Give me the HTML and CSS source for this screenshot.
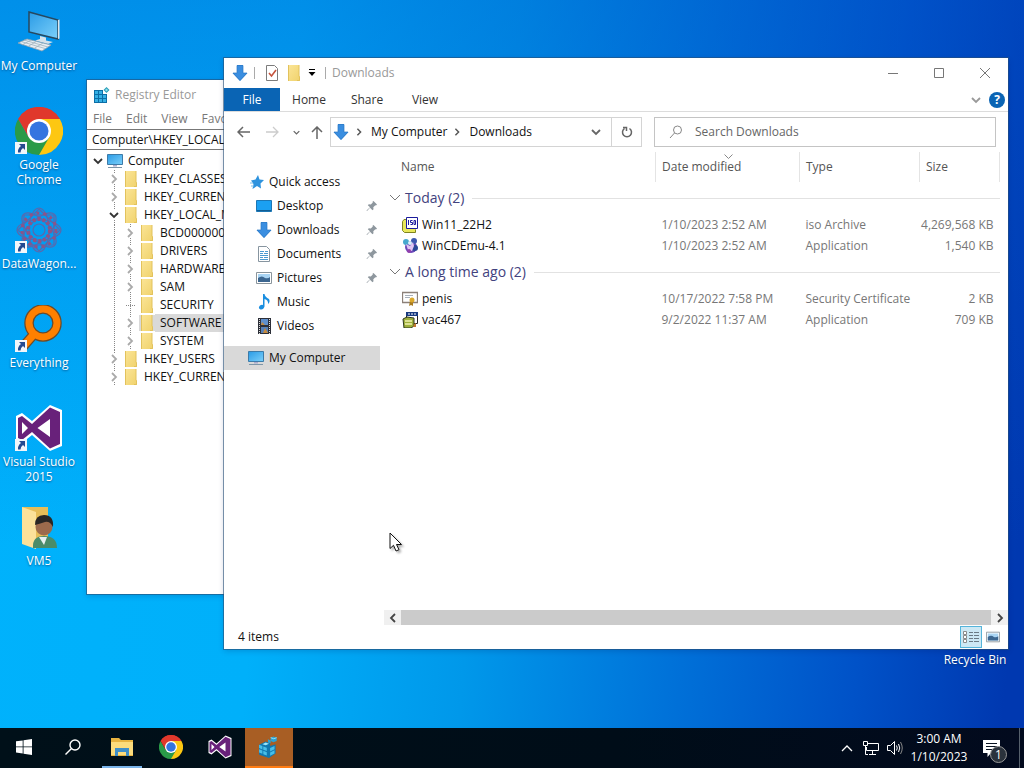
FILE: index.html
```html
<!DOCTYPE html>
<html lang="en">
<head>
    <meta charset="UTF-8">
    <meta name="viewport" content="width=device-width, initial-scale=1.0">
    <title>Downloads</title>
    <link rel="stylesheet" href="styles.css">
</head>
<body>
    <!-- shared icons -->
    <svg class="defs" aria-hidden="true">
        <defs>
            <linearGradient id="screen" x1="0" y1="0" x2="1" y2="1">
                <stop offset="0" stop-color="#2a9be6"/>
                <stop offset="1" stop-color="#7cd0fa"/>
            </linearGradient>
            <linearGradient id="fold" x1="0" y1="0" x2="1" y2="1">
                <stop offset="0" stop-color="#fbe597"/>
                <stop offset="1" stop-color="#f0d26c"/>
            </linearGradient>
        </defs>
        <symbol id="folder" viewBox="0 0 16 16">
            <path d="M2 0h11v11l1 1v4H2z" fill="url(#fold)"/>
            <path d="M2.500 0v16M13 0v11.500h.5v4H11" fill="none" stroke="#e2c25c"/>
        </symbol>
        <symbol id="down" viewBox="0 0 16 16">
            <path d="M5 0h6v8h4.500L8 16 .5 8H5z" fill="#3a8ee0"/>
            <path d="M5 .5h6v7.500h4L8 15.500 1 8h4z" fill="none" stroke="#2c78c4" stroke-width=".7"/>
        </symbol>
        <symbol id="pc" viewBox="0 0 16 16">
            <path d="M.5 1.500h15v10H.5z" fill="url(#screen)" stroke="#3d7ba8"/>
            <path d="M6 12h4v1.500H6z" fill="#aac"/>
            <path d="M1 14.500h14" stroke="#7d95a8"/>
        </symbol>
        <symbol id="chrome" viewBox="0 0 48 48">
            <path d="M24 24 3.200 12A24 24 0 0 1 44.800 12z" fill="#e0382c"/>
            <path d="M24 24V12h20.800A24 24 0 0 1 24 48z" fill="#fdc712"/>
            <path d="M24 24 34.400 30 24 48A24 24 0 0 1 3.200 12L13.600 30z" fill="#2a9a48"/>
            <path d="M24 12h20.800A24 24 0 0 0 3.200 12L13.600 30z" fill="#e0382c"/>
            <circle cx="24" cy="24" r="12" fill="#fff"/>
            <circle cx="24" cy="24" r="9.500" fill="#3474e0"/>
        </symbol>
        <symbol id="vs" viewBox="0 0 48 48">
            <path d="M35 1 47 6v36l-12 5-18-16-10 8-6-3V12l6-3 10 8z" fill="#fff"/>
            <path d="M35 3.500 45 8v32l-10 4.500-18-16.500L7 36l-4-2V14l4-2 10 8z" fill="#68217a"/>
            <path d="M35 15v18L22.500 24zM7 18v12l6-6z" fill="#fff"/>
        </symbol>
        <symbol id="regedit" viewBox="0 0 20 20">
            <path d="M1 8 7 5l4 1.500V9l5-1.500V16l-6 4-9-3z" fill="#1178b0"/>
            <path d="m1 8 3 1.200v3L1 11zm3.800 1.500L8 10.700v3l-3.200-1.200zM1 12l3 1.200v3L1 15zm3.800 1.500L8 14.700v3l-3.200-1.200zM11 11l4-2v3l-4 2zm0 4 4-2v3l-4 2z" fill="#49bfe8"/>
            <path d="m4 7.500 3-1.500 3 1-3 1.500z" fill="#9be6fa"/>
            <path d="m14 .5 3 1v3l-3 1.200-2.500-1.200v-3zM9 3l2.500 1v2.500L9 6z" fill="#2aa2d4"/>
            <path d="m11.500 1.500 2.800 1L17 1.500" fill="none" stroke="#a0e8fa" stroke-width=".8"/>
        </symbol>
        <symbol id="regedit-small" viewBox="0 0 16 16">
            <path d="M0 3h13v13H0z" fill="#0c6ea6"/>
            <path d="M1 4h3v3H1zm4 0h3v3H5zM1 8h3v3H1zm4 0h3v3H5zm4 0h3v3H9zM1 12h3v3H1zm4 0h3v3H5zm4 0h3v3H9z" fill="#35b0e4"/>
            <path d="M9 3h4v4H9z" fill="#fff"/>
            <path d="m12.500 0 3 3-3 3-3-3z" fill="#2b9fb8"/>
            <path d="m12.500 1.500 1.500 1.500-1.500 1.500L11 3z" fill="#8fe0ee"/>
        </symbol>
        <symbol id="shortcut" viewBox="0 0 12 12">
            <path d="M0 0h12v12H0z" fill="#f2f6fa"/>
            <path d="M4 2h6v6L8 6Q5.500 7.500 5.500 10.500H3Q2.500 6.500 6 4z" fill="#244a90"/>
        </symbol>
        <symbol id="picture" viewBox="0 0 16 16">
            <path d="M.5 2.500h15v11H.5z" fill="#fff" stroke="#8a959c"/>
            <path d="M2 4h12v8H2z" fill="#a9d4f3"/>
            <path d="M2 8q4-3 7 0 3 1 5-1v5H2z" fill="#3c6690"/>
        </symbol>
        <symbol id="chev-right" viewBox="0 0 10 10"><path d="m3 1 4 4-4 4" fill="none" stroke="currentColor" stroke-width="1.800"/></symbol>
        <symbol id="chev-down" viewBox="0 0 10 10"><path d="m1 3 4 4 4-4" fill="none" stroke="currentColor" stroke-width="1.800"/></symbol>
        <symbol id="pin" viewBox="0 0 12 12">
            <path d="M7.500 1 11 4.500l-1 1-.7-.2-2 2 .2 2-1 1L4 7.800 1 11l-.5-.5L4 7.200 1.800 5.200l1-1 2 .2 2-2-.3-.6z" fill="#8e979e"/>
        </symbol>
    </svg>

    <main class="desktop">
        <div class="shortcuts">
            <a class="shortcut" href="#">
                <svg class="big" viewBox="0 0 48 48">
                    <path d="m14 4 29 8v19l-29-7z" fill="url(#screen)" stroke="#27485f" stroke-width="1.500"/>
                    <path d="m43 12 1.500-.5v19L43 31z" fill="#dde6ec"/>
                    <path d="m25 28 6 1.500v3l7 1.500-5 2-13-3.500 5-1.500z" fill="#d7e2ea"/>
                    <path d="m12 31 24 6-9 6L3 35z" fill="#e8eef2" stroke="#8aa0b0" stroke-width=".8"/>
                    <path d="m9 32 24 7M6 33.500l24 7M16 32l-9 5M22 33l-9 5.500M28 35l-9 5.500" stroke="#9fb2be" stroke-width=".8"/>
                </svg>
                <span>My Computer</span>
            </a>
            <a class="shortcut" href="#">
                <svg class="big"><use href="#chrome"/></svg>
                <svg class="arrow"><use href="#shortcut"/></svg>
                <span>Google Chrome</span>
            </a>
            <a class="shortcut" href="#">
                <svg class="big" viewBox="0 0 48 48">
                    <g fill="none" stroke="#5a68ac" stroke-width="1.200">
                        <circle cx="24" cy="24" r="6"/>
                        <ellipse cx="24" cy="24" rx="22" ry="10"/>
                        <ellipse cx="24" cy="24" rx="10" ry="22"/>
                        <ellipse cx="24" cy="24" rx="22" ry="10" transform="rotate(45 24 24)"/>
                        <ellipse cx="24" cy="24" rx="22" ry="10" transform="rotate(-45 24 24)"/>
                        <path d="M9 9h30v30H9zM24 3l21 21-21 21L3 24z"/>
                    </g>
                    <circle cx="24" cy="24" r="11" fill="none" stroke="#8c5488" stroke-width="4" stroke-dasharray="3 2"/>
                    <circle cx="24" cy="24" r="17" fill="none" stroke="#8c5488" stroke-width="3" stroke-dasharray="3 4"/>
                </svg>
                <svg class="arrow"><use href="#shortcut"/></svg>
                <span>DataWagon...</span>
            </a>
            <a class="shortcut" href="#">
                <svg class="big" viewBox="0 0 48 48">
                    <path d="m20 28-14 16" stroke="#6b4a2a" stroke-width="10"/>
                    <circle cx="28" cy="18" r="14" fill="none" stroke="#6b4a2a" stroke-width="9.500"/>
                    <path d="m20 28-14 16" stroke="#ff8000" stroke-width="7.500"/>
                    <circle cx="28" cy="18" r="14" fill="none" stroke="#ff8000" stroke-width="7"/>
                </svg>
                <svg class="arrow"><use href="#shortcut"/></svg>
                <span>Everything</span>
            </a>
            <a class="shortcut" href="#">
                <svg class="big"><use href="#vs"/></svg>
                <svg class="arrow"><use href="#shortcut"/></svg>
                <span>Visual Studio 2015</span>
            </a>
            <a class="shortcut" href="#">
                <svg class="big" viewBox="0 0 48 48">
                    <path d="M7 4h26v36H7z" fill="#e6bd58"/>
                    <path d="m7 4 14 5v37L7 41z" fill="#fbe19a"/>
                    <path d="M18 45q-1-12 11-12 13 0 13 12z" fill="#4a8c6a"/>
                    <path d="m24 34 5 8 3-8z" fill="#e8f0f0"/>
                    <circle cx="29" cy="24" r="8.500" fill="#9c6a4c"/>
                    <path d="M20 22q0-10 9-10 10 0 9 12-3-6-8-5-6 2-10 3z" fill="#2a2624"/>
                </svg>
                <span>VM5</span>
            </a>
        </div>
        <a class="shortcut recycle" href="#"><span>Recycle Bin</span></a>

        <section class="window registry">
            <header class="reg-title">
                <svg class="i16"><use href="#regedit-small"/></svg>
                <span>Registry Editor</span>
            </header>
            <nav class="reg-menu">
                <a href="#">File</a><a href="#">Edit</a><a href="#">View</a><a href="#">Favorites</a><a href="#">Help</a>
            </nav>
            <input class="reg-path" type="text" aria-label="Key path" value="Computer\HKEY_LOCAL_MACHINE\SOFTWARE">
            <ul class="tree">
                <li>
                    <div class="key"><svg class="exp open"><use href="#chev-down"/></svg><svg class="i16"><use href="#pc"/></svg><span>Computer</span></div>
                    <ul class="level">
                        <li><div class="key"><svg class="exp"><use href="#chev-right"/></svg><svg class="i16"><use href="#folder"/></svg><span>HKEY_CLASSES_ROOT</span></div></li>
                        <li><div class="key"><svg class="exp"><use href="#chev-right"/></svg><svg class="i16"><use href="#folder"/></svg><span>HKEY_CURRENT_USER</span></div></li>
                        <li>
                            <div class="key"><svg class="exp open"><use href="#chev-down"/></svg><svg class="i16"><use href="#folder"/></svg><span>HKEY_LOCAL_MACHINE</span></div>
                            <ul class="sublevel">
                                <li><div class="key"><svg class="exp"><use href="#chev-right"/></svg><svg class="i16"><use href="#folder"/></svg><span>BCD00000000</span></div></li>
                                <li><div class="key"><svg class="exp"><use href="#chev-right"/></svg><svg class="i16"><use href="#folder"/></svg><span>DRIVERS</span></div></li>
                                <li><div class="key"><svg class="exp"><use href="#chev-right"/></svg><svg class="i16"><use href="#folder"/></svg><span>HARDWARE</span></div></li>
                                <li><div class="key"><svg class="exp"><use href="#chev-right"/></svg><svg class="i16"><use href="#folder"/></svg><span>SAM</span></div></li>
                                <li><div class="key"><i class="leaf"></i><svg class="i16"><use href="#folder"/></svg><span>SECURITY</span></div></li>
                                <li><div class="key selected"><svg class="exp"><use href="#chev-right"/></svg><svg class="i16"><use href="#folder"/></svg><span>SOFTWARE</span></div></li>
                                <li><div class="key"><svg class="exp"><use href="#chev-right"/></svg><svg class="i16"><use href="#folder"/></svg><span>SYSTEM</span></div></li>
                            </ul>
                        </li>
                        <li><div class="key"><svg class="exp"><use href="#chev-right"/></svg><svg class="i16"><use href="#folder"/></svg><span>HKEY_USERS</span></div></li>
                        <li><div class="key"><svg class="exp"><use href="#chev-right"/></svg><svg class="i16"><use href="#folder"/></svg><span>HKEY_CURRENT_CONFIG</span></div></li>
                    </ul>
                </li>
            </ul>
        </section>

        <section class="window explorer">
            <header class="titlebar">
                <svg class="i16"><use href="#down"/></svg>
                <i class="bar"></i>
                <button class="quick" aria-label="Properties">
                    <svg class="i16" viewBox="0 0 16 16">
                        <path d="M2.500.5h8l3 3v12h-11z" fill="#fff" stroke="#7c7c7c"/>
                        <path d="m5 8 2.500 3L12 5" fill="none" stroke="#c5533c" stroke-width="1.600"/>
                    </svg>
                </button>
                <button class="quick" aria-label="New folder"><svg class="i16"><use href="#folder"/></svg></button>
                <button class="quick narrow" aria-label="Customize toolbar">
                    <svg width="8" height="8" viewBox="0 0 8 8"><path d="M1 .5h6" stroke="#000"/><path d="M.5 3h7L4 7z"/></svg>
                </button>
                <i class="bar"></i>
                <h1>Downloads</h1>
                <div class="controls">
                    <button aria-label="Minimize"><svg width="10" height="11" viewBox="0 0 10 11"><path d="M0 5.500h10" stroke="#777"/></svg></button>
                    <button aria-label="Maximize"><svg width="10" height="10" viewBox="0 0 10 10"><path d="M.5.5h9v9H.5z" fill="none" stroke="#777"/></svg></button>
                    <button aria-label="Close"><svg width="10" height="10" viewBox="0 0 10 10"><path d="m0 0 10 10m0-10L0 10" stroke="#777"/></svg></button>
                </div>
            </header>
            <nav class="tabs">
                <a class="file" href="#">File</a><a href="#">Home</a><a href="#">Share</a><a href="#">View</a>
                <button class="expand" aria-label="Expand ribbon"><svg class="i10"><use href="#chev-down"/></svg></button>
                <button class="help" aria-label="Help">?</button>
            </nav>
            <div class="navbar">
                <button class="go" aria-label="Back"><svg width="13" height="12" viewBox="0 0 13 12"><path d="M13 6H1.500M6 1 1 6l5 5" fill="none" stroke="#666" stroke-width="1.500"/></svg></button>
                <button class="go" aria-label="Forward"><svg width="13" height="12" viewBox="0 0 13 12"><path d="M0 6h11.500M7 1l5 5-5 5" fill="none" stroke="#ccc" stroke-width="1.300"/></svg></button>
                <button class="go small" aria-label="Recent"><svg width="7" height="7"><use href="#chev-down"/></svg></button>
                <button class="go up" aria-label="Up"><svg width="12" height="13" viewBox="0 0 12 13"><path d="M6 13V1.500M1 6l5-5 5 5" fill="none" stroke="#666" stroke-width="1.500"/></svg></button>
                <div class="address">
                    <svg class="i16"><use href="#down"/></svg>
                    <svg class="crumb-sep"><use href="#chev-right"/></svg>
                    <a href="#">My Computer</a>
                    <svg class="crumb-sep"><use href="#chev-right"/></svg>
                    <a href="#">Downloads</a>
                    <button class="history" aria-label="Previous locations"><svg class="i10"><use href="#chev-down"/></svg></button>
                    <button class="refresh" aria-label="Refresh"><svg width="12" height="12" viewBox="0 0 12 12"><path d="M3.500 2.500A4.500 4.500 0 1 0 8.500 2.500M2 1.500h3.500V5" fill="none" stroke="#666" stroke-width="1.500"/></svg></button>
                </div>
                <label class="search">
                    <svg width="14" height="14" viewBox="0 0 14 14"><circle cx="8.500" cy="5" r="4" fill="none" stroke="#888"/><path d="M5.500 8 1 13" stroke="#888"/></svg>
                    <input type="text" placeholder="Search Downloads" aria-label="Search Downloads">
                </label>
            </div>
            <div class="content">
                <nav class="places">
                    <a class="top" href="#">
                        <svg width="14" height="14" viewBox="0 0 14 14"><path d="m8 0 1.500 4.500L14 5l-3.500 3.500L11 13.500 7 11l-4.500 3L3.500 9 1 5.500l4.500-1z" fill="#2e93de"/><path d="M0 8h3M1 11h3" stroke="#79bdea"/></svg>
                        Quick access
                    </a>
                    <a href="#">
                        <svg class="i16" viewBox="0 0 16 16"><path d="M.5 2.500h15v11H.5z" fill="#1ba0f2" stroke="#1c77b5"/><path d="M1 12.500h14" stroke="#125d93"/></svg>
                        <span>Desktop</span><svg class="pin"><use href="#pin"/></svg>
                    </a>
                    <a href="#">
                        <svg class="i16"><use href="#down"/></svg>
                        <span>Downloads</span><svg class="pin"><use href="#pin"/></svg>
                    </a>
                    <a href="#">
                        <svg class="i16" viewBox="0 0 16 16"><path d="M2.500.5h8l3 3v12h-11z" fill="#fff" stroke="#8795a0"/><path d="M4 5.500h4m1 0h3M4 7.500h3m1 0h4M4 9.500h8M4 11.500h3m1 0h4M4 13.500h8" stroke="#4a9ad0"/></svg>
                        <span>Documents</span><svg class="pin"><use href="#pin"/></svg>
                    </a>
                    <a href="#">
                        <svg class="i16"><use href="#picture"/></svg>
                        <span>Pictures</span><svg class="pin"><use href="#pin"/></svg>
                    </a>
                    <a href="#">
                        <svg class="i16" viewBox="0 0 16 16"><path d="M7 0h1.500q.5 3 4.500 5 1.500 3-1 5 .5-4-3.500-5v7.500Q7.500 16 4.500 15.500 1.500 14 4 11.500 5.500 10.500 7 11z" fill="#1a8ee0"/></svg>
                        <span>Music</span>
                    </a>
                    <a href="#">
                        <svg class="i16" viewBox="0 0 16 16"><path d="M2 0h13v16H2z" fill="#2c2f38"/><path d="M5 1h7v6H5z" fill="#5f8fcc"/><path d="M5 9h7v6H5z" fill="#5680b8"/><path d="M6 4l3 3H5zM9 10l3 5H7z" fill="#c58a3e"/><path d="M3.500 1v15M13.500 1v15" stroke="#ddd" stroke-dasharray="1 1"/></svg>
                        <span>Videos</span>
                    </a>
                    <a class="top current" href="#">
                        <svg class="i16"><use href="#pc"/></svg>
                        My Computer
                    </a>
                </nav>
                <div class="files">
                    <table>
                        <colgroup><col><col class="c-date"><col class="c-type"><col class="c-size"></colgroup>
                        <thead>
                            <tr>
                                <th>Name</th>
                                <th>Date modified<svg class="sort" width="9" height="5" viewBox="0 0 9 5"><path d="m.5.5 4 4 4-4" fill="none" stroke="#888"/></svg></th>
                                <th>Type</th>
                                <th>Size</th>
                            </tr>
                        </thead>
                        <tbody>
                            <tr class="group"><th colspan="4"><div><svg class="i12" viewBox="0 0 12 12"><path d="m1 3 5 5 5-5" fill="none" stroke="#777"/></svg>Today (2)</div></th></tr>
                            <tr>
                                <td><div class="name"><svg class="i16" viewBox="0 0 16 16"><path d="M4 2.500h-2l-1.500 2v9l2 2h11v-3" fill="#e8e85a" stroke="#7f8420"/><path d="M4.500.5h11v11h-11z" fill="#fff" stroke="#1b1b9c"/><path d="M6.500 3v5M12 3.500h1.500v4H12zM10.500 3.500h-2v2h2v2h-2" fill="none" stroke="#1b1b9c"/></svg>Win11_22H2</div></td>
                                <td>1/10/2023 2:52 AM</td><td>iso Archive</td><td>4,269,568 KB</td>
                            </tr>
                            <tr>
                                <td><div class="name"><svg class="i16" viewBox="0 0 16 16"><circle cx="9" cy="9" r="6" fill="#6b48b8"/><circle cx="4" cy="4" r="3" fill="#47a8ce"/><circle cx="12" cy="3" r="3" fill="#3b58b0"/><circle cx="13" cy="10" r="3" fill="#2a4898"/><path d="m4 6 4 2 3-4 1 4-2 5-4-1z" fill="#e0c4f2"/><circle cx="7" cy="13" r="2" fill="#923fae"/><circle cx="8" cy="5" r="2" fill="#d8f0fa"/></svg>WinCDEmu-4.1</div></td>
                                <td>1/10/2023 2:52 AM</td><td>Application</td><td>1,540 KB</td>
                            </tr>
                        </tbody>
                        <tbody>
                            <tr class="group"><th colspan="4"><div><svg class="i12" viewBox="0 0 12 12"><path d="m1 3 5 5 5-5" fill="none" stroke="#777"/></svg>A long time ago (2)</div></th></tr>
                            <tr>
                                <td><div class="name"><svg class="i16" viewBox="0 0 16 16"><path d="M.5 1.500h15v10H.5z" fill="#fff" stroke="#8c8078" stroke-width="1.300"/><path d="M3 4.500h8M3 6.500h5" stroke="#a8b0ba"/><path d="m8 10-1 5 2-1 2 1V9z" fill="#a87b20"/><circle cx="10" cy="9" r="2.500" fill="#dba82c"/></svg>penis</div></td>
                                <td>10/17/2022 7:58 PM</td><td>Security Certificate</td><td>2 KB</td>
                            </tr>
                            <tr>
                                <td><div class="name"><svg class="i16" viewBox="0 0 16 16"><path d="M4.500.5h11v11h-11z" fill="#fff" stroke="#222"/><path d="M4 0h12v4H4z" fill="#183a80"/><path d="M6 2h2m1 0h2m1 0h2" stroke="#fff"/><path d="m1 7 4-2 7 1v8l-3 2H2z" fill="#9fb03c" stroke="#2d3820"/><path d="M3 9h7M3 12h7" stroke="#f2f2b0" stroke-width="1.500"/><path d="m12 12 2-1v4h-3" fill="#c07830"/></svg>vac467</div></td>
                                <td>9/2/2022 11:37 AM</td><td>Application</td><td>709 KB</td>
                            </tr>
                        </tbody>
                    </table>
                    <div class="scrollbar">
                        <button aria-label="Scroll left"><svg class="i10 flip"><use href="#chev-right"/></svg></button>
                        <div class="thumb"></div>
                        <button aria-label="Scroll right"><svg class="i10"><use href="#chev-right"/></svg></button>
                    </div>
                </div>
            </div>
            <footer class="status">
                <span>4 items</span>
                <button class="on" aria-label="Details view"><svg width="16" height="14" viewBox="0 0 16 14"><path d="M.5 1.500h3v3h-3zm0 4h3v3h-3zm0 4h3v3h-3z" fill="#fff" stroke="#8a8a8a"/><path d="M6 2.500h4m1 0h5M6 5.500h4m1 0h5M6 8.500h4m1 0h5M6 11.500h4m1 0h5" stroke="#6a7a84"/></svg></button>
                <button aria-label="Large icons view"><svg width="14" height="14"><use href="#picture"/></svg></button>
            </footer>
        </section>

        <svg class="cursor" viewBox="0 0 14 21"><path d="M1 1v15.500l3.500-3.200L7 19l3-1.300-2.500-5.200h5z" fill="#fff" stroke="#111"/></svg>
    </main>

    <footer class="taskbar">
        <button class="task" aria-label="Start"><svg class="i16" viewBox="0 0 16 16"><path d="m0 2.300 6.700-.9v6H0zM7.500 1.300 16 0v7.400H7.500zM0 8.300h6.700v6.200L0 13.600zM7.500 8.300H16V16l-8.500-1.300z" fill="#fff"/></svg></button>
        <button class="task" aria-label="Search"><svg class="i16" viewBox="0 0 16 16"><circle cx="10" cy="6" r="5" fill="none" stroke="#fff" stroke-width="1.400"/><path d="M6.500 9.500.5 15.500" stroke="#fff" stroke-width="1.400"/></svg></button>
        <button class="task running" aria-label="File Explorer">
            <svg width="22" height="18" viewBox="0 0 22 18"><path d="M0 0h8l2 2h12v16H0z" fill="#e8b440"/><path d="M0 4h22v13H0z" fill="#fcdc7c"/><path d="M4 10h14v8h-3v-4H7v4H4z" fill="#3f8fc8"/></svg>
        </button>
        <button class="task" aria-label="Google Chrome"><svg class="i24"><use href="#chrome"/></svg></button>
        <button class="task" aria-label="Visual Studio"><svg class="i24"><use href="#vs"/></svg></button>
        <button class="task active" aria-label="Registry Editor"><svg width="22" height="22"><use href="#regedit"/></svg></button>
        <div class="tray">
            <button aria-label="Show hidden icons"><svg width="12" height="8" viewBox="0 0 12 8"><path d="m1 7 5-5 5 5" fill="none" stroke="#fff" stroke-width="1.300"/></svg></button>
            <button aria-label="Network"><svg class="i16" viewBox="0 0 16 16"><path d="M5 3.500h10.500v7H3.500V7M9.500 11v3M6 14.500h7M.5 1.500h4v4h-4zM2.500 6v8.500H5" fill="none" stroke="#fff"/></svg></button>
            <button aria-label="Volume"><svg class="i16" viewBox="0 0 16 16"><path d="M.5 5.500h3l4-4v13l-4-4h-3z" fill="none" stroke="#fff"/><path d="M9.500 5.500q1.500 2.500 0 5M11.500 4q2.500 4 0 8" fill="none" stroke="#fff"/><path d="M13.500 2q3.500 6 0 12" fill="none" stroke="#888"/></svg></button>
            <div class="clock"><span>3:00 AM</span><span>1/10/2023</span></div>
            <button class="notify" aria-label="Notifications">
                <svg width="17" height="17" viewBox="0 0 17 17"><path d="M0 0h17v13h-9l-3.500 4v-4H0z" fill="#fff"/><path d="M3 3.500h11M3 6.500h11M3 9.500h7" stroke="#0a1422"/></svg>
                <span class="badge">1</span>
            </button>
            <i class="peek"></i>
        </div>
    </footer>
</body>
</html>
```
FILE: styles.css
```css
* {
    box-sizing: border-box;
}
body {
    margin: 0;
    height: 100vh;
    display: flex;
    flex-direction: column;
    overflow: hidden;
    font-family: "Open Sans", "Noto Sans", sans-serif;
    font-size: 12px;
    line-height: 18px;
    color: #111;
}
a {
    color: inherit;
    text-decoration: none;
}
button {
    display: flex;
    align-items: center;
    justify-content: center;
    padding: 0;
    border: 0;
    background: none;
    font: inherit;
    color: #666;
}
svg {
    flex: none;
    display: block;
}
ul {
    list-style: none;
    margin: 0;
    padding: 0;
}
.defs {
    position: absolute;
    width: 0;
    height: 0;
}
.i10 { width: 10px; height: 10px; }
.i12 { width: 12px; height: 12px; }
.i16 { width: 16px; height: 16px; }
.i24 { width: 24px; height: 24px; }

/* desktop */
.desktop {
    flex: 1;
    position: relative;
    background:
        linear-gradient(180deg, rgba(0, 80, 200, 0.35), rgba(0, 80, 200, 0) 75%),
        linear-gradient(95deg, #00b2fc 0%, #00b0fa 28%, #0098ea 48%, #0070d8 68%, #0052c8 84%, #0038b0 98%);
}
.shortcuts {
    width: 78px;
    display: grid;
    grid-auto-rows: 99px;
}
.shortcut {
    position: relative;
    display: flex;
    flex-direction: column;
    align-items: center;
    padding-top: 8px;
    line-height: 15px;
    color: #fff;
    text-align: center;
    text-shadow: 0 1px 2px rgba(0, 40, 90, 0.6);
}
.shortcut .big {
    width: 48px;
    height: 48px;
    margin-bottom: 2px;
}
.shortcut .arrow {
    position: absolute;
    left: 15px;
    top: 43px;
    width: 12px;
    height: 12px;
}
.recycle {
    position: absolute;
    right: 10px;
    bottom: 61px;
    width: 78px;
}
.window {
    position: absolute;
    background: #fff;
    box-shadow: 0 0 0 1px rgba(40, 80, 120, 0.6), 0 2px 6px rgba(0, 20, 80, 0.2);
    display: flex;
    flex-direction: column;
}

/* registry editor */
.registry {
    left: 87px;
    top: 80px;
    right: 320px;
    bottom: 134px;
}
.reg-title {
    display: flex;
    align-items: center;
    gap: 5px;
    height: 29px;
    padding-left: 7px;
    color: #999;
}
.reg-menu {
    display: flex;
    align-items: center;
    gap: 14px;
    height: 20px;
    padding-left: 6px;
    color: #777;
}
.reg-path {
    height: 21px;
    padding: 0 5px;
    border: solid #777;
    border-width: 1px 0;
    font: inherit;
    color: #111;
}
.tree {
    padding: 2px 0 0 6px;
}
.key {
    display: flex;
    align-items: center;
    height: 18px;
    white-space: nowrap;
}
.key .i16 {
    margin: 0 5px 0 4px;
}
.exp {
    width: 10px;
    height: 10px;
    background: #fff;
    color: #aaa;
}
.exp.open {
    color: #333;
}
.level {
    padding-left: 16px;
}
.level .key {
    background: linear-gradient(#888 50%, transparent 0) 5px 0 / 1px 2px repeat-y;
}
.sublevel {
    margin-left: 5px;
    padding-left: 10px;
    border-left: 1px dotted #888;
}
.leaf {
    width: 10px;
    height: 1px;
    background: linear-gradient(90deg, #888 50%, transparent 0) 5px 0 / 2px 1px repeat-x;
}
.key.selected span {
    padding: 0 5px;
}
.key.selected span,
.key.selected .i16 {
    background: #d9d9d9;
}
.key.selected .i16 {
    margin-right: 0;
}

/* explorer */
.explorer {
    left: 224px;
    top: 58px;
    right: 16px;
    bottom: 79px;
}
.titlebar {
    display: flex;
    align-items: center;
    height: 30px;
    padding-left: 8px;
}
.bar {
    width: 1px;
    height: 12px;
    margin: 0 6px;
    background: #aaa;
}
.quick {
    width: 22px;
}
.quick.narrow {
    width: 14px;
}
.titlebar h1 {
    margin: 0;
    font-size: 12px;
    font-weight: 400;
    color: #999;
}
.controls {
    display: flex;
    margin-left: auto;
}
.controls button {
    width: 46px;
    height: 28px;
}
.tabs {
    display: flex;
    align-items: center;
    height: 24px;
    border-bottom: 1px solid #dcdcdc;
    color: #333;
}
.tabs a {
    width: 58px;
    line-height: 23px;
    text-align: center;
}
.tabs a.file {
    width: 56px;
    background: #0a64b4;
    color: #fff;
}
.tabs .expand {
    margin-left: auto;
    margin-right: 8px;
    color: #999;
}
.help {
    width: 16px;
    height: 16px;
    margin-right: 3px;
    border-radius: 50%;
    background: #0a64b4;
    color: #fff;
    font-weight: 700;
}
.navbar {
    display: flex;
    align-items: center;
    height: 40px;
    padding: 0 12px 0 5px;
}
.go {
    width: 29px;
}
.go.small {
    width: 18px;
}
.go.up {
    width: 24px;
}
.address {
    flex: 308;
    display: flex;
    align-items: center;
    height: 30px;
    margin: 0 12px 0 1px;
    padding-left: 2px;
    border: 1px solid #d4d4d4;
}
.crumb-sep {
    width: 8px;
    height: 8px;
    margin: 0 8px 0 6px;
    color: #555;
}
.history {
    width: 30px;
    height: 28px;
    margin-left: auto;
}
.refresh {
    width: 30px;
    height: 28px;
    border-left: 1px solid #d4d4d4;
}
.search {
    flex: 326;
    display: flex;
    align-items: center;
    gap: 12px;
    height: 30px;
    padding-left: 14px;
    border: 1px solid #c4c4c4;
}
.search input {
    flex: 1;
    min-width: 0;
    padding: 0;
    border: 0;
    outline: 0;
    font: inherit;
}
.search input::placeholder {
    color: #666;
    opacity: 1;
}
.content {
    flex: 1;
    min-height: 0;
    display: flex;
}
.places {
    width: 156px;
    padding-top: 18px;
}
.places a {
    display: flex;
    align-items: center;
    gap: 5px;
    height: 24px;
    padding: 0 2px 0 32px;
}
.places a.top {
    padding-left: 26px;
}
.places a.current {
    margin-top: 8px;
    padding-left: 24px;
    background: #d9d9d9;
}
.pin {
    width: 12px;
    height: 12px;
    margin-left: auto;
}
.files {
    flex: 1;
    display: flex;
    flex-direction: column;
    padding-left: 4px;
}
table {
    width: calc(100% - 8px);
    table-layout: fixed;
    border-collapse: collapse;
}
.c-date { width: 144px; }
.c-type { width: 120px; }
.c-size { width: 80px; }
thead th {
    position: relative;
    height: 30px;
    padding: 0 6px;
    border-right: 1px solid #e4e4e4;
    font-weight: 400;
    text-align: left;
    color: #555;
}
thead th:first-child {
    padding-left: 17px;
}
.sort {
    position: absolute;
    left: 68px;
    top: 2px;
}
.group th {
    height: 32px;
    padding: 0;
    font-size: 14px;
    font-weight: 400;
    color: #42427e;
}
.group div {
    display: flex;
    align-items: center;
    gap: 4px;
    padding-left: 5px;
}
.group div::after {
    content: "";
    flex: 1;
    height: 1px;
    margin-left: 4px;
    background: #e2e2e2;
}
td {
    height: 21px;
    padding: 0 6px;
    color: #777;
    white-space: nowrap;
}
td:last-child {
    padding-left: 0;
    text-align: right;
}
.name {
    display: flex;
    align-items: center;
    gap: 4px;
    padding-left: 12px;
    color: #111;
}
.scrollbar {
    display: flex;
    height: 15px;
    margin-top: auto;
    background: #f0f0f0;
}
.scrollbar button {
    width: 17px;
    color: #444;
}
.flip {
    transform: scaleX(-1);
}
.thumb {
    flex: 1;
    background: #cbcbcb;
}
.status {
    display: flex;
    align-items: center;
    height: 24px;
    padding: 0 4px 0 14px;
}
.status span {
    margin-right: auto;
}
.status button {
    width: 22px;
    height: 22px;
}
.status .on {
    border: 1px solid #55b4da;
    background: #cce8f4;
}
.cursor {
    position: absolute;
    left: 389px;
    top: 532px;
    width: 14px;
    height: 21px;
    filter: drop-shadow(2px 2px 1px rgba(0, 0, 0, 0.3));
}

/* taskbar */
.taskbar {
    display: flex;
    gap: 1px;
    height: 40px;
    background: linear-gradient(90deg, #001019, #000d18 60%, #020a1e);
    color: #fff;
}
.task {
    width: 48px;
    border-bottom: 2px solid transparent;
}
.running {
    background: linear-gradient(#7ab4ea, #7ab4ea) center bottom / 40px 2px no-repeat border-box;
}
.active {
    background: #a85e24;
    border-color: #ff7d14;
}
.tray {
    display: flex;
    align-items: center;
    margin-left: auto;
}
.tray button {
    width: 24px;
    height: 40px;
}
.clock {
    display: flex;
    flex-direction: column;
    width: 64px;
    text-align: center;
}
.tray .notify {
    position: relative;
    width: 48px;
}
.notify svg {
    margin-right: 8px;
}
.badge {
    position: absolute;
    left: 19px;
    top: 18px;
    width: 17px;
    height: 17px;
    border: 1px solid #999;
    border-radius: 50%;
    background: #2a323c;
    color: #fff;
    font-size: 12px;
    line-height: 15px;
}
.peek {
    width: 5px;
    height: 40px;
    border-left: 1px solid #56606c;
}
```
